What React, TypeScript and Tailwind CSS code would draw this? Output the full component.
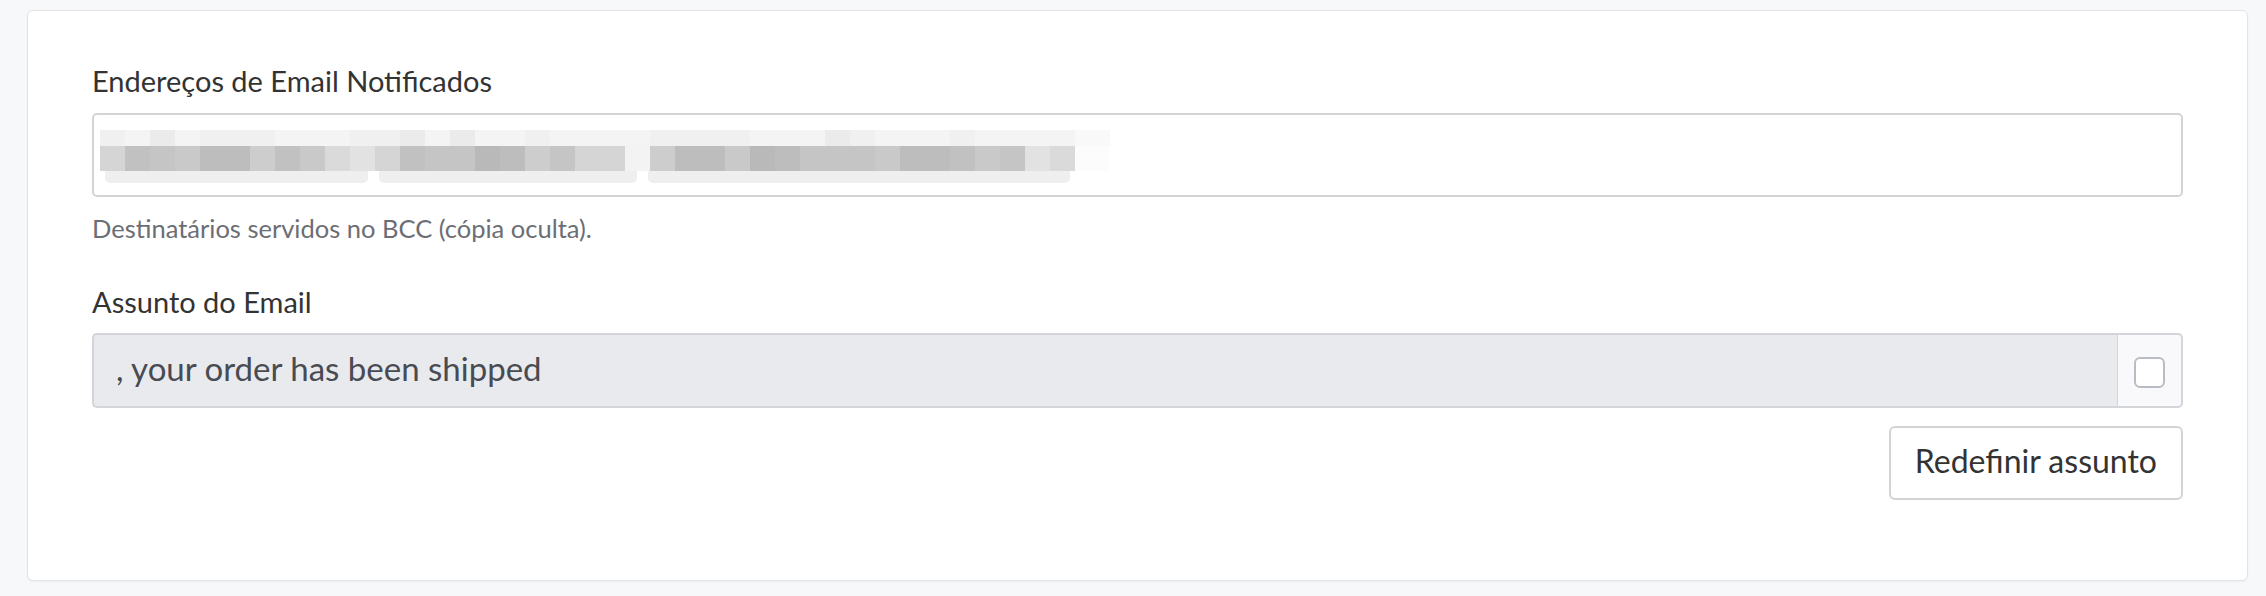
import React from "react";

const DARK: Record<string, string> = {
  A: "bg-[#b9b9b9]",
  B: "bg-[#bdbdbd]",
  C: "bg-[#c1c1c1]",
  D: "bg-[#c5c5c5]",
  E: "bg-[#c9c9c9]",
  F: "bg-[#cdcdcd]",
  G: "bg-[#d5d5d5]",
  H: "bg-[#dadada]",
  I: "bg-[#e2e2e2]",
  J: "bg-[#f3f3f3]",
};

const LIGHT: Record<string, string> = {
  a: "bg-[#f4f4f4]",
  b: "bg-[#f0f0f0]",
  c: "bg-[#ebebeb]",
};

const darkRow = "GCDEBBFCEHIGCDDABFDGGJFBBEABDDDEBBCEDIH";
const lightRow = "bacabbbaaabbcacaabaaaabbbbaaacbaaabaaaa";

function BlurredEmails() {
  const cells = darkRow.split("").map((d, i) => ({ d, l: lightRow[i] ?? "a" }));
  return (
    <div className="flex flex-col">
      <div className="flex">
        {cells.map((c, i) => (
          <div key={i} className="flex w-[25px] flex-col">
            <div className={`h-[16px] ${LIGHT[c.l]}`} />
            <div className={`h-[25px] ${DARK[c.d]}`} />
          </div>
        ))}
        <div className="flex w-[35px] flex-col">
          <div className="h-[16px] bg-[#f9f9f9]" />
          <div className="h-[25px] bg-[#fcfcfc]" />
        </div>
      </div>
      <div className="ml-[5px] flex gap-[11px]">
        <div className="h-[12px] w-[263px] rounded-b-[5px] bg-[#efefef]" />
        <div className="h-[12px] w-[258px] rounded-b-[5px] bg-[#efefef]" />
        <div className="h-[12px] w-[422px] rounded-b-[5px] bg-[#efefef]" />
      </div>
    </div>
  );
}

export default function App() {
  return (
    <div className="h-[596px] w-full bg-[#f7f8fa] pl-[27px] pr-[18px] pt-[10px] [font-family:Lato,sans-serif]">
      <div className="h-[571px] rounded-[6px] border border-[#e2e3e6] bg-white px-[64px] pt-[53px] shadow-[0_1px_2px_rgba(0,0,0,0.04)]">
        <label className="block text-[29px] leading-[34px] text-[#333333]">
          Endereços de Email Notificados
        </label>
        <div className="mt-[15px] h-[84px] rounded-[5px] border-2 border-[#d4d4d4] pl-[6px] pt-[15px]">
          <BlurredEmails />
        </div>
        <p className="mt-[16px] text-[25.5px] leading-[30px] text-[#6b6e74]">
          Destinatários servidos no BCC (cópia oculta).
        </p>
        <label className="mt-[42px] block text-[29px] leading-[34px] text-[#333333]">
          Assunto do Email
        </label>
        <div className="mt-[14px] flex h-[75px]">
          <div className="flex flex-1 items-center rounded-l-[5px] border-2 border-r-0 border-[#d4d5d9] bg-[#e9eaee] pb-[5px] pl-[22px] text-[33px] leading-[38px] text-[#484b52]">
            , your order has been shipped
          </div>
          <div className="flex w-[66px] items-center justify-center rounded-r-[5px] border-y-2 border-l border-r-2 border-[#d4d5d9] bg-[#f9f9fb]">
            <div className="mt-[3px] h-[31px] w-[31px] rounded-[6px] border-2 border-[#b9bcc3] bg-white" />
          </div>
        </div>
        <div className="mt-[18px] flex justify-end">
          <button className="h-[74px] rounded-[6px] border-2 border-[#d3d3d3] bg-white px-[24px] pb-[4px] text-[32px] leading-[38px] text-[#333333]">
            Redefinir assunto
          </button>
        </div>
      </div>
    </div>
  );
}
